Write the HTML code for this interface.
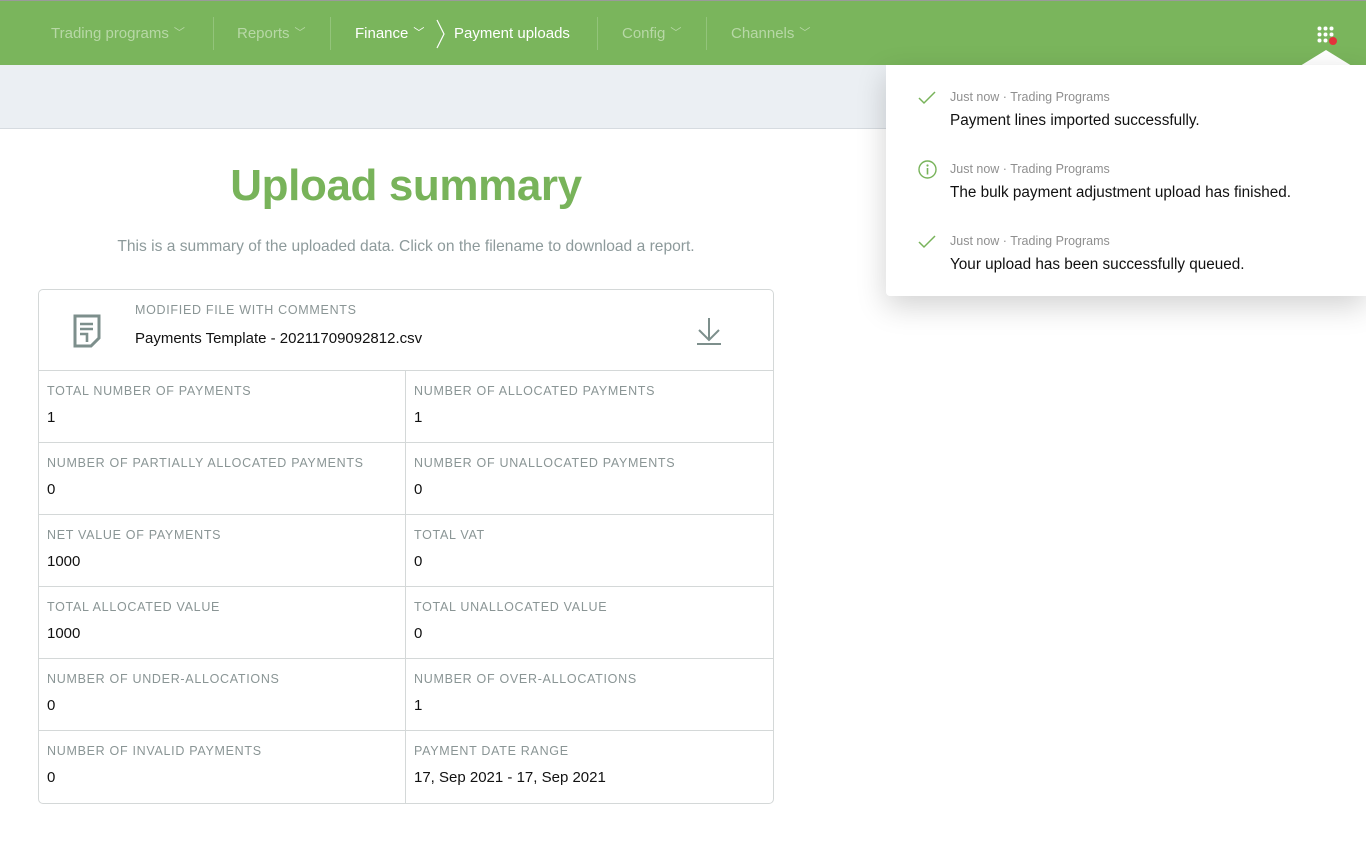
<!DOCTYPE html>
<html><head><meta charset="utf-8"><style>
*{box-sizing:border-box;margin:0;padding:0}
body{width:1366px;height:852px;overflow:hidden;background:#fff;font-family:"Liberation Sans",sans-serif;position:relative}
.nav{position:absolute;left:0;top:0;width:1366px;height:65px;background:#7ab55c;border-top:1px solid #9a9a9a}
.nav span{position:absolute;top:24px;font-size:15px;color:#b7d8a6}
.nav .w{color:#fff}
.nav i{font-style:normal;font-size:11px;margin-left:5px;position:relative;top:-2px}
.sep{position:absolute;top:16px;width:1px;height:33px;background:#93c47b}
.band{position:absolute;left:0;top:65px;width:1366px;height:64px;background:#ebeff3;border-bottom:1px solid #d6dbe0}
h1{position:absolute;left:0;width:812px;top:161px;text-align:center;font-size:44px;font-weight:bold;color:#78b35a;letter-spacing:-0.4px}
.sub{position:absolute;left:0;width:812px;top:238px;text-align:center;font-size:15.6px;color:#8d9a9b}
.tbl{position:absolute;left:38px;top:289px;width:736px;height:515px;border:1px solid #d4d8d8;border-radius:5px}
.hdr{height:81px;border-bottom:1px solid #d4d8d8;position:relative}
.lbl{font-size:12.5px;letter-spacing:.7px;color:#8a9595}
.val{font-size:15px;color:#111}
.row{height:72px;border-bottom:1px solid #d4d8d8;display:flex}
.row:last-child{border-bottom:none}
.cell{width:366px;padding:13px 0 0 8px}
.cell+.cell{border-left:1px solid #d4d8d8;width:368px}
.cell .val{margin-top:11px}
.pop{position:absolute;left:886px;top:65px;width:480px;height:231px;background:#fff;box-shadow:0 10px 30px rgba(0,0,0,.18);border-radius:0 0 0 4px}
.n{position:absolute;left:64px}
.n .m{font-size:12.5px;color:#8f8f8f}
.n .t{font-size:15.3px;color:#111;margin-top:8px}
.ic{position:absolute;left:32px}
</style></head><body>
<div class="nav">
<span style="left:51px">Trading programs<i>﹀</i></span>
<div class="sep" style="left:213px"></div>
<span style="left:237px">Reports<i>﹀</i></span>
<div class="sep" style="left:330px"></div>
<span class="w" style="left:355px">Finance<i>﹀</i></span>
<svg style="position:absolute;left:436px;top:18px" width="10" height="30"><path d="M1 1 L8 15 L1 29" stroke="#fff" fill="none" stroke-width="1.2"/></svg>
<span class="w" style="left:454px">Payment uploads</span>
<div class="sep" style="left:597px"></div>
<span style="left:622px">Config<i>﹀</i></span>
<div class="sep" style="left:706px"></div>
<span style="left:731px">Channels<i>﹀</i></span>
<svg style="position:absolute;left:1317px;top:25px" width="22" height="20"><g fill="#fff"><circle cx="2.5" cy="2.5" r="2"/><circle cx="8.5" cy="2.5" r="2"/><circle cx="14.5" cy="2.5" r="2"/><circle cx="2.5" cy="8.5" r="2"/><circle cx="8.5" cy="8.5" r="2"/><circle cx="14.5" cy="8.5" r="2"/><circle cx="2.5" cy="14.5" r="2"/><circle cx="8.5" cy="14.5" r="2"/></g><circle cx="16" cy="15" r="4" fill="#e2333b"/></svg>
<svg style="position:absolute;left:1300px;top:49px" width="52" height="17"><path d="M0 16 L26 0 L52 16Z" fill="#fff"/></svg>
</div>
<div class="band"></div>
<h1>Upload summary</h1>
<div class="sub">This is a summary of the uploaded data. Click on the filename to download a report.</div>
<div class="tbl">
<div class="hdr">
<svg style="position:absolute;left:34px;top:24px" width="30" height="34" viewBox="0 0 30 34"><path d="M2 2 H26 V24 L18 32 H2 Z" fill="none" stroke="#7d8f8c" stroke-width="3"/><path d="M7 10H20M7 15H20M7 20H14V28" stroke="#7d8f8c" stroke-width="2.6" fill="none"/></svg>
<div class="lbl" style="position:absolute;left:96px;top:13px">MODIFIED FILE WITH COMMENTS</div>
<div class="val" style="position:absolute;left:96px;top:40px">Payments Template - 20211709092812.csv</div>
<svg style="position:absolute;left:656px;top:26px" width="28" height="30"><path d="M14 2V24M4 14L14 24L24 14M2 28H26" stroke="#7d8f8c" stroke-width="2" fill="none"/></svg>
</div>
<div class="row"><div class="cell"><div class="lbl">TOTAL NUMBER OF PAYMENTS</div><div class="val">1</div></div><div class="cell"><div class="lbl">NUMBER OF ALLOCATED PAYMENTS</div><div class="val">1</div></div></div>
<div class="row"><div class="cell"><div class="lbl">NUMBER OF PARTIALLY ALLOCATED PAYMENTS</div><div class="val">0</div></div><div class="cell"><div class="lbl">NUMBER OF UNALLOCATED PAYMENTS</div><div class="val">0</div></div></div>
<div class="row"><div class="cell"><div class="lbl">NET VALUE OF PAYMENTS</div><div class="val">1000</div></div><div class="cell"><div class="lbl">TOTAL VAT</div><div class="val">0</div></div></div>
<div class="row"><div class="cell"><div class="lbl">TOTAL ALLOCATED VALUE</div><div class="val">1000</div></div><div class="cell"><div class="lbl">TOTAL UNALLOCATED VALUE</div><div class="val">0</div></div></div>
<div class="row"><div class="cell"><div class="lbl">NUMBER OF UNDER-ALLOCATIONS</div><div class="val">0</div></div><div class="cell"><div class="lbl">NUMBER OF OVER-ALLOCATIONS</div><div class="val">1</div></div></div>
<div class="row"><div class="cell"><div class="lbl">NUMBER OF INVALID PAYMENTS</div><div class="val">0</div></div><div class="cell"><div class="lbl">PAYMENT DATE RANGE</div><div class="val">17, Sep 2021 - 17, Sep 2021</div></div></div>
</div>
<div class="pop">
<svg class="ic" style="top:26px" width="18" height="14"><path d="M1 7L6 12L17 1" stroke="#78b35a" stroke-width="1.5" fill="none"/></svg>
<div class="n" style="top:25px"><div class="m">Just now · Trading Programs</div><div class="t">Payment lines imported successfully.</div></div>
<svg class="ic" style="top:95px" width="19" height="19"><circle cx="9.5" cy="9.5" r="8.5" stroke="#78b35a" stroke-width="1.4" fill="none"/><circle cx="9.5" cy="5.5" r="1.1" fill="#78b35a"/><path d="M9.5 8V14.5" stroke="#78b35a" stroke-width="1.6"/></svg>
<div class="n" style="top:97px"><div class="m">Just now · Trading Programs</div><div class="t">The bulk payment adjustment upload has finished.</div></div>
<svg class="ic" style="top:170px" width="18" height="14"><path d="M1 7L6 12L17 1" stroke="#78b35a" stroke-width="1.5" fill="none"/></svg>
<div class="n" style="top:169px"><div class="m">Just now · Trading Programs</div><div class="t">Your upload has been successfully queued.</div></div>
</div>
</body></html>
